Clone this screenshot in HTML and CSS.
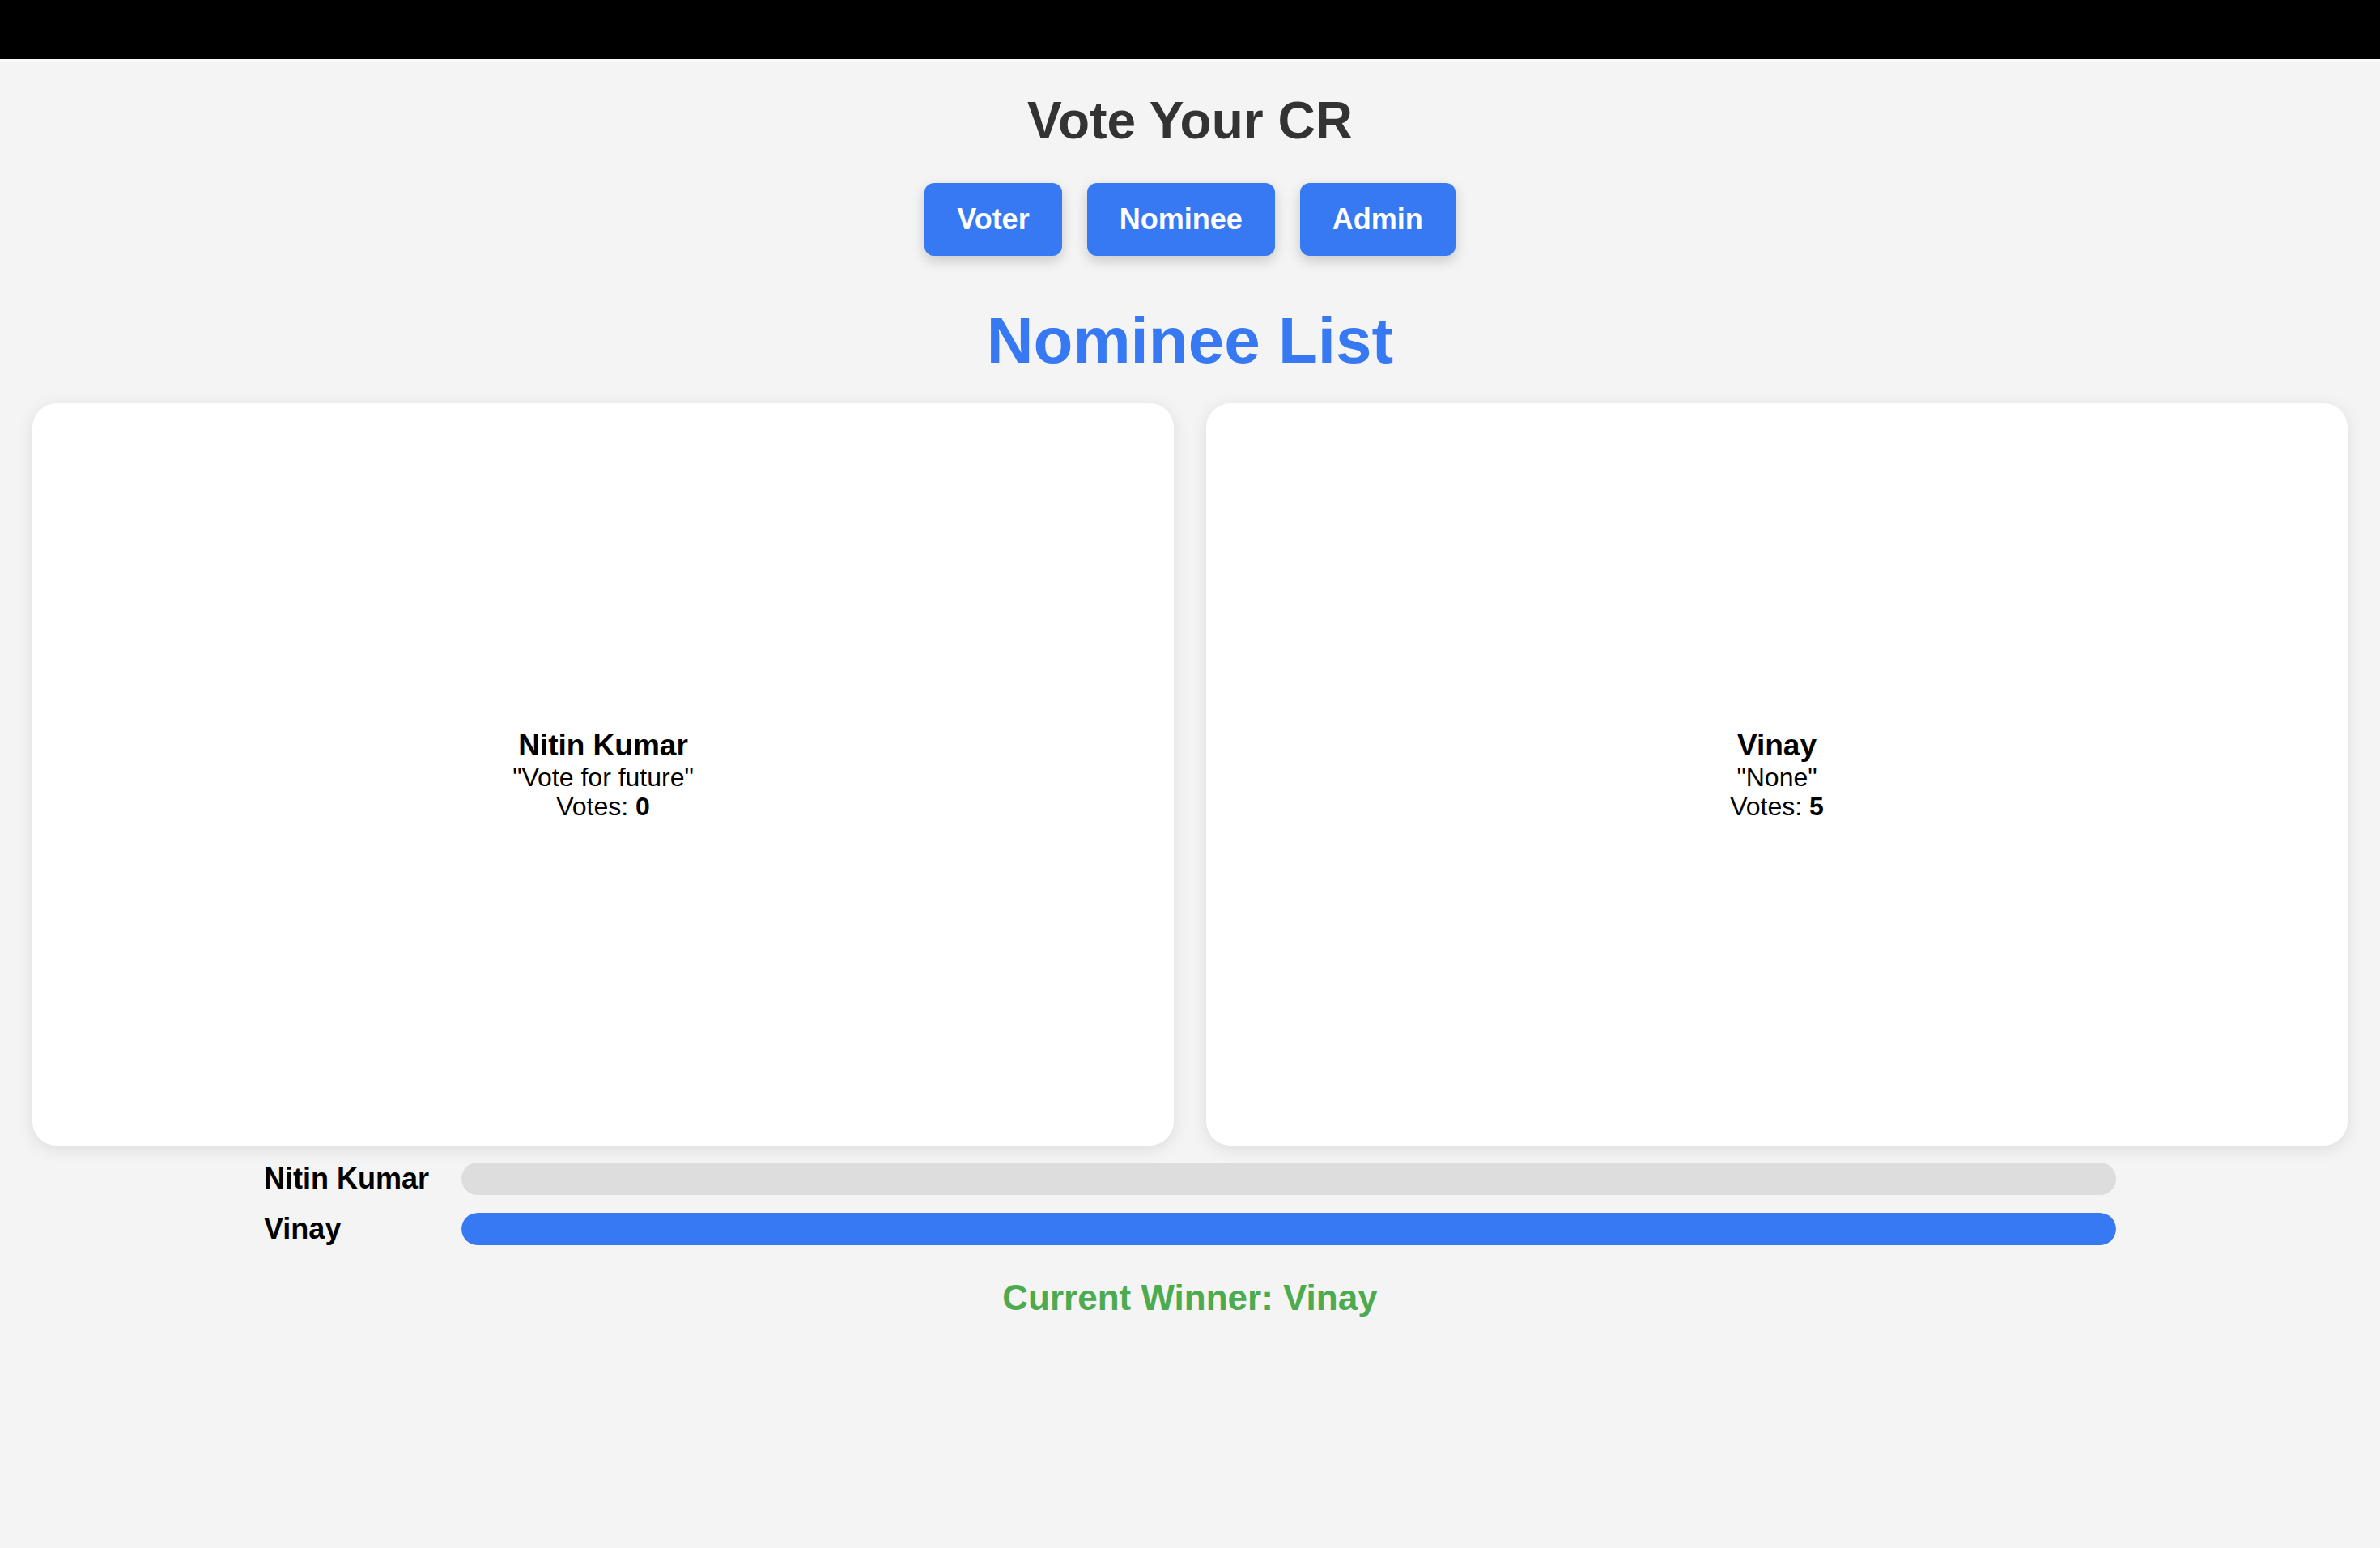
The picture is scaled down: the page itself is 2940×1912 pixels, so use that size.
FILE: index.html
```html
<!DOCTYPE html>
<html lang="en">
<head>
<meta charset="utf-8">
<title>Vote Your CR</title>
<link rel="stylesheet" href="styles.css">
</head>
<body>
<div class="topbar"></div>
<main class="page">
  <h1 class="title">Vote Your CR</h1>
  <nav class="tabs">
    <button class="tab">Voter</button>
    <button class="tab">Nominee</button>
    <button class="tab">Admin</button>
  </nav>
  <h2 class="section-title">Nominee List</h2>
  <div class="cards">
    <div class="card">
      <div class="card-body">
        <div class="name">Nitin Kumar</div>
        <div class="slogan">"Vote for future"</div>
        <div class="votes">Votes: <b>0</b></div>
      </div>
    </div>
    <div class="card">
      <div class="card-body">
        <div class="name">Vinay</div>
        <div class="slogan">"None"</div>
        <div class="votes">Votes: <b>5</b></div>
      </div>
    </div>
  </div>
  <div class="results">
    <div class="result-row">
      <span class="label">Nitin Kumar</span>
      <div class="track"><div class="fill" style="width:0%"></div></div>
    </div>
    <div class="result-row">
      <span class="label">Vinay</span>
      <div class="track"><div class="fill" style="width:100%"></div></div>
    </div>
  </div>
  <p class="winner">Current Winner: Vinay</p>
</main>
</body>
</html>
```
FILE: styles.css
```css
* { box-sizing: border-box; }
html, body {
  margin: 0;
  padding: 0;
  background: #f4f4f4;
  font-family: "Liberation Sans", Arial, sans-serif;
  color: #000;
}
.topbar {
  height: 76px;
  background: #000;
  border-bottom: 3px solid #fafafa;
}
.page {
  display: flex;
  flex-direction: column;
  align-items: stretch;
  padding-bottom: 200px;
}
.title {
  margin: 36px 0 0;
  font-size: 64px;
  line-height: 74px;
  font-weight: 700;
  color: #333;
  text-align: center;
}
.tabs {
  margin-top: 40px;
  display: flex;
  justify-content: center;
  gap: 31px;
}
.tab {
  font-family: "Liberation Sans", Arial, sans-serif;
  font-size: 36px;
  font-weight: 700;
  line-height: 42px;
  padding: 24px 40px;
  color: #fff;
  background: #3779f2;
  border: none;
  border-radius: 12px;
  box-shadow: 0 6px 16px rgba(0, 0, 0, 0.18);
}
.section-title {
  margin: 59px 0 0;
  font-size: 80px;
  line-height: 92px;
  font-weight: 700;
  color: #3779f2;
  text-align: center;
}
.cards {
  margin-top: 31px;
  padding: 0 40px;
  display: grid;
  grid-template-columns: 1fr 1fr;
  gap: 40px;
}
.card {
  height: 917px;
  background: #fff;
  border-radius: 30px;
  box-shadow: 0 4px 20px rgba(0, 0, 0, 0.1);
  display: flex;
  align-items: center;
  justify-content: center;
  text-align: center;
}
.name {
  font-size: 37px;
  font-weight: 700;
  line-height: 42px;
}
.slogan, .votes {
  font-size: 32px;
  line-height: 36px;
}
.results {
  width: 2288px;
  margin: 21px auto 0;
  display: flex;
  flex-direction: column;
  gap: 22px;
}
.result-row {
  display: flex;
  align-items: center;
  height: 40px;
}
.label {
  width: 244px;
  flex: none;
  font-size: 36px;
  font-weight: 700;
  line-height: 40px;
}
.track {
  flex: 1;
  height: 40px;
  background: #dddddd;
  border-radius: 20px;
  overflow: hidden;
}
.fill {
  height: 100%;
  background: #3779f2;
  border-radius: 20px;
}
.winner {
  margin: 40px 0 0;
  text-align: center;
  font-size: 44px;
  line-height: 50px;
  font-weight: 700;
  color: #4caa4f;
}
```
